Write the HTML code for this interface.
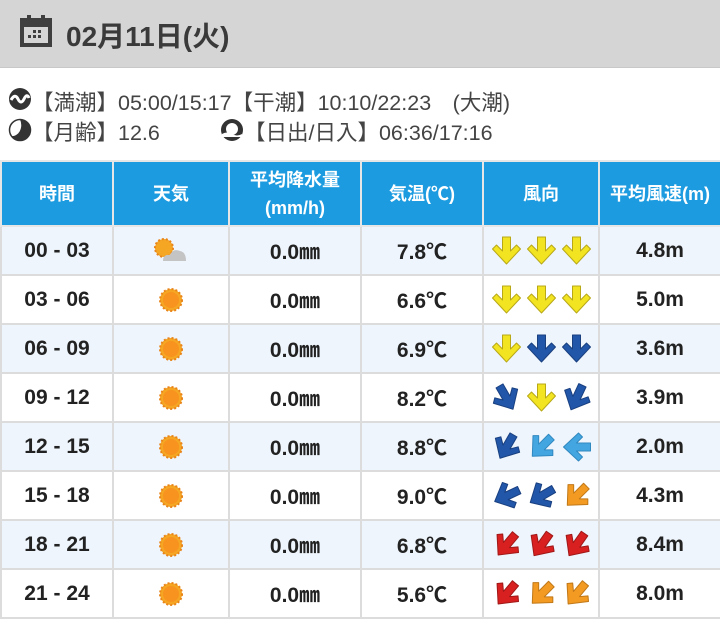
<!DOCTYPE html>
<html><head><meta charset="utf-8"><style>
*{margin:0;padding:0;box-sizing:border-box}
body{width:720px;height:624px;background:#fff;font-family:"Liberation Sans","Noto Sans CJK JP",sans-serif;color:#222;overflow:hidden;position:relative}
.top{position:absolute;left:0;top:0;width:720px;height:68px;background:#d5d5d5;border-bottom:1px solid #c8c8c8}
.top .t{position:absolute;left:66px;top:15px;font-size:28px;font-weight:bold;color:#3a3a3a}
.info{position:absolute;left:8px;font-size:21.5px;color:#444;white-space:nowrap}
table{position:absolute;left:0;top:160px;border-collapse:collapse;width:720px;table-layout:fixed}
td,th{border:2px solid #dcdcdc;text-align:center;font-size:21px}
th{background:#1c9be0;color:#fff;font-weight:bold;height:65px;font-size:18px;line-height:28px;border-color:#e6e6e6}
td{height:49px;font-weight:bold;color:#222}
tr:nth-child(odd) td{background:#eef5fc}
.arr{display:inline-block;width:35px;height:34px;vertical-align:middle;overflow:visible}
</style></head><body>
<div class="top">
<svg style="position:absolute;left:19px;top:14px" width="34" height="34" viewBox="0 0 34 34"><rect x="3" y="6" width="28" height="25" fill="none" stroke="#3f3f3f" stroke-width="4"/><rect x="3" y="6" width="28" height="7" fill="#3f3f3f"/><rect x="8" y="1" width="4" height="7" fill="#3f3f3f"/><rect x="22" y="1" width="4" height="7" fill="#3f3f3f"/><g fill="#3f3f3f"><rect x="14" y="16" width="3" height="3"/><rect x="19" y="16" width="3" height="3"/><rect x="9" y="21" width="3" height="3"/><rect x="14" y="21" width="3" height="3"/><rect x="19" y="21" width="3" height="3"/></g></svg>
<div class="t">02月11日(火)</div></div>
<svg style="position:absolute;left:8px;top:87px" width="24" height="24" viewBox="0 0 24 24"><circle cx="12" cy="12" r="11" fill="#333"/><path d="M3 13 Q7 6 10 12 T16 12 T21 11" stroke="#fff" stroke-width="3" fill="none"/></svg>
<div class="info" style="left:32px;top:86px">【満潮】05:00/15:17【干潮】10:10/22:23　(大潮)</div>
<svg style="position:absolute;left:8px;top:118px" width="24" height="24" viewBox="0 0 24 24"><circle cx="12" cy="12" r="10.5" fill="#fff" stroke="#333" stroke-width="1.5"/><path d="M12 1.5 A10.5 10.5 0 1 1 3 18 A9 11 0 0 0 12 1.5Z" fill="#333"/></svg>
<div class="info" style="left:32px;top:116px">【月齢】12.6</div>
<svg style="position:absolute;left:220px;top:118px" width="24" height="24" viewBox="0 0 24 24"><circle cx="12" cy="12" r="11" fill="#333"/><circle cx="12" cy="11" r="6" fill="#fff"/><path d="M2 16 Q7 13 12 16 T22 16 L22 19 L2 19Z" fill="#fff"/></svg>
<div class="info" style="left:244px;top:116px">【日出/日入】06:36/17:16</div>
<table>
<colgroup><col style="width:112px"><col style="width:116px"><col style="width:132px"><col style="width:122px"><col style="width:116px"><col style="width:122px"></colgroup>
<tr><th>時間</th><th>天気</th><th>平均降水量<br>(mm/h)</th><th>気温(℃)</th><th>風向</th><th>平均風速(m)</th></tr>
<tbody id="b"></tbody>
</table>
<script>
var Y=['#f2e420','#b8a818'],D=['#2156a8','#1a4080'],L=['#44a6e0','#3088c0'],O=['#f29a22','#c07818'],R=['#d82020','#a01818'];
var rows=[["00 - 03",1,"7.8℃",[[Y,0],[Y,0],[Y,0]],"4.8m"],["03 - 06",0,"6.6℃",[[Y,0],[Y,0],[Y,0]],"5.0m"],["06 - 09",0,"6.9℃",[[Y,0],[D,0],[D,0]],"3.6m"],["09 - 12",0,"8.2℃",[[D,-30],[Y,0],[D,25]],"3.9m"],["12 - 15",0,"8.8℃",[[D,30],[L,45],[L,90]],"2.0m"],["15 - 18",0,"9.0℃",[[D,65],[D,60],[O,45]],"4.3m"],["18 - 21",0,"6.8℃",[[R,40],[R,35],[R,35]],"8.4m"],["21 - 24",0,"5.6℃",[[R,40],[O,45],[O,40]],"8.0m"]];
var sun='<svg width="28" height="28" viewBox="0 0 28 28" style="vertical-align:middle"><circle cx="14" cy="14" r="11" fill="#f5a623" stroke="#e8841a" stroke-width="2" stroke-dasharray="2 2"/><circle cx="14" cy="14" r="8" fill="#f7931e"/></svg>';
var cloud='<svg width="36" height="28" viewBox="0 0 36 28" style="vertical-align:middle"><circle cx="11" cy="11" r="9" fill="#f5a623" stroke="#e8841a" stroke-width="2" stroke-dasharray="2 2"/><path d="M10 24 Q10 17 17 18 Q20 11 27 14 Q33 15 33 24Z" fill="#c4c4c4"/></svg>';
var P="M-4 -14 L4 -14 L4 0 L10 -6 L14 -2 L0 13 L-14 -2 L-10 -6 L-4 0Z";
var h='';rows.forEach(function(r){h+='<tr><td>'+r[0]+'</td><td>'+(r[1]?cloud:sun)+'</td><td>0.0㎜</td><td>'+r[2]+'</td><td style="padding:0 1px">';
r[3].forEach(function(a){h+='<svg class="arr" viewBox="-17.5 -17 35 34"><g transform="rotate('+a[1]+')"><path d="'+P+'" fill="'+a[0][0]+'" stroke="'+a[0][1]+'" stroke-width="1" stroke-linejoin="round"/></g></svg>';});
h+='</td><td>'+r[4]+'</td></tr>';});
document.getElementById('b').innerHTML=h;
</script>
</body></html>
